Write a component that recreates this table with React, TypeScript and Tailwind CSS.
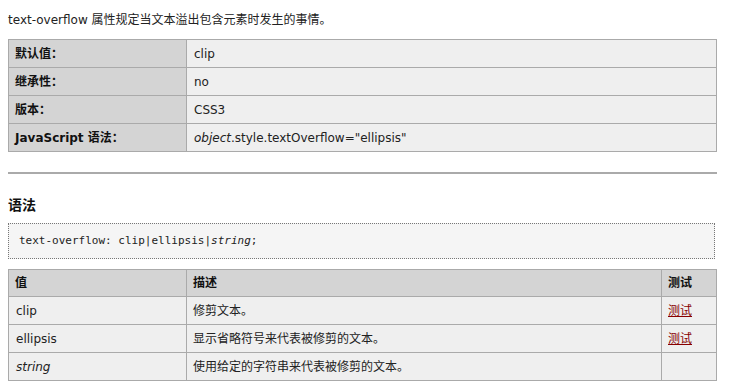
import React from "react";

const font = { fontFamily: '"DejaVu Sans", Verdana, "Noto Sans CJK SC", sans-serif' };

type Prop = { label: string; value: React.ReactNode };

const props: Prop[] = [
  { label: "默认值：", value: "clip" },
  { label: "继承性：", value: "no" },
  { label: "版本：", value: "CSS3" },
  {
    label: "JavaScript 语法：",
    value: (
      <>
        <i>object</i>.style.textOverflow="ellipsis"
      </>
    ),
  },
];

type Val = { name: React.ReactNode; desc: string; test: boolean };

const values: Val[] = [
  { name: "clip", desc: "修剪文本。", test: true },
  { name: "ellipsis", desc: "显示省略符号来代表被修剪的文本。", test: true },
  { name: <i>string</i>, desc: "使用给定的字符串来代表被修剪的文本。", test: false },
];

export default function App() {
  return (
    <div className="bg-white w-[731px] h-[386px] overflow-hidden text-[12px] text-[#222]" style={font}>
      <div className="pl-[8px] w-[717px] pt-[12px]">
        <p className="leading-[16px]">text-overflow 属性规定当文本溢出包含元素时发生的事情。</p>

        <table className="mt-[11px] w-[709px] border-collapse table-fixed">
          <colgroup>
            <col className="w-[178px]" />
            <col />
          </colgroup>
          <tbody>
            {props.map((p, i) => (
              <tr key={i} className="h-[28px]">
                <th className="border border-[#aaa] bg-[#d4d4d4] text-left font-bold pl-[6px] text-[#111] leading-[16px]">
                  {p.label}
                </th>
                <td className="border border-[#aaa] bg-[#efefef] pl-[7px] leading-[16px]">{p.value}</td>
              </tr>
            ))}
          </tbody>
        </table>

        <div className="mt-[20px] h-[2px] w-[709px] bg-[#aaa]" />

        <h2 className="mt-[21px] text-[14px] font-bold leading-[20px] text-[#111]">语法</h2>

        <div className="mt-[8px] h-[36px] w-[707px] border border-dotted border-[#777] bg-[#f5f5f5] pl-[10px] flex items-center">
          <code
            className="text-[11px] text-[#222]"
            style={{ fontFamily: '"DejaVu Sans Mono", "Liberation Mono", monospace' }}
          >
            text-overflow: clip|ellipsis|<i>string</i>;
          </code>
        </div>

        <table className="mt-[10px] w-[709px] border-collapse table-fixed">
          <colgroup>
            <col className="w-[178px]" />
            <col />
            <col className="w-[55px]" />
          </colgroup>
          <thead>
            <tr className="h-[27px] bg-[#d4d4d4] text-[#111]">
              <th className="border border-[#aaa] text-left font-bold pl-[6px]">值</th>
              <th className="border border-[#aaa] text-left font-bold pl-[6px]">描述</th>
              <th className="border border-[#aaa] text-left font-bold pl-[6px]">测试</th>
            </tr>
          </thead>
          <tbody>
            {values.map((v, i) => (
              <tr key={i} className="h-[28px] bg-[#efefef]">
                <td className="border border-[#aaa] pl-[7px]">{v.name}</td>
                <td className="border border-[#aaa] pl-[6px]">{v.desc}</td>
                <td className="border border-[#aaa] pl-[6px]">
                  {v.test && (
                    <a href="#" className="text-[#800] underline">
                      测试
                    </a>
                  )}
                </td>
              </tr>
            ))}
          </tbody>
        </table>
      </div>
    </div>
  );
}
